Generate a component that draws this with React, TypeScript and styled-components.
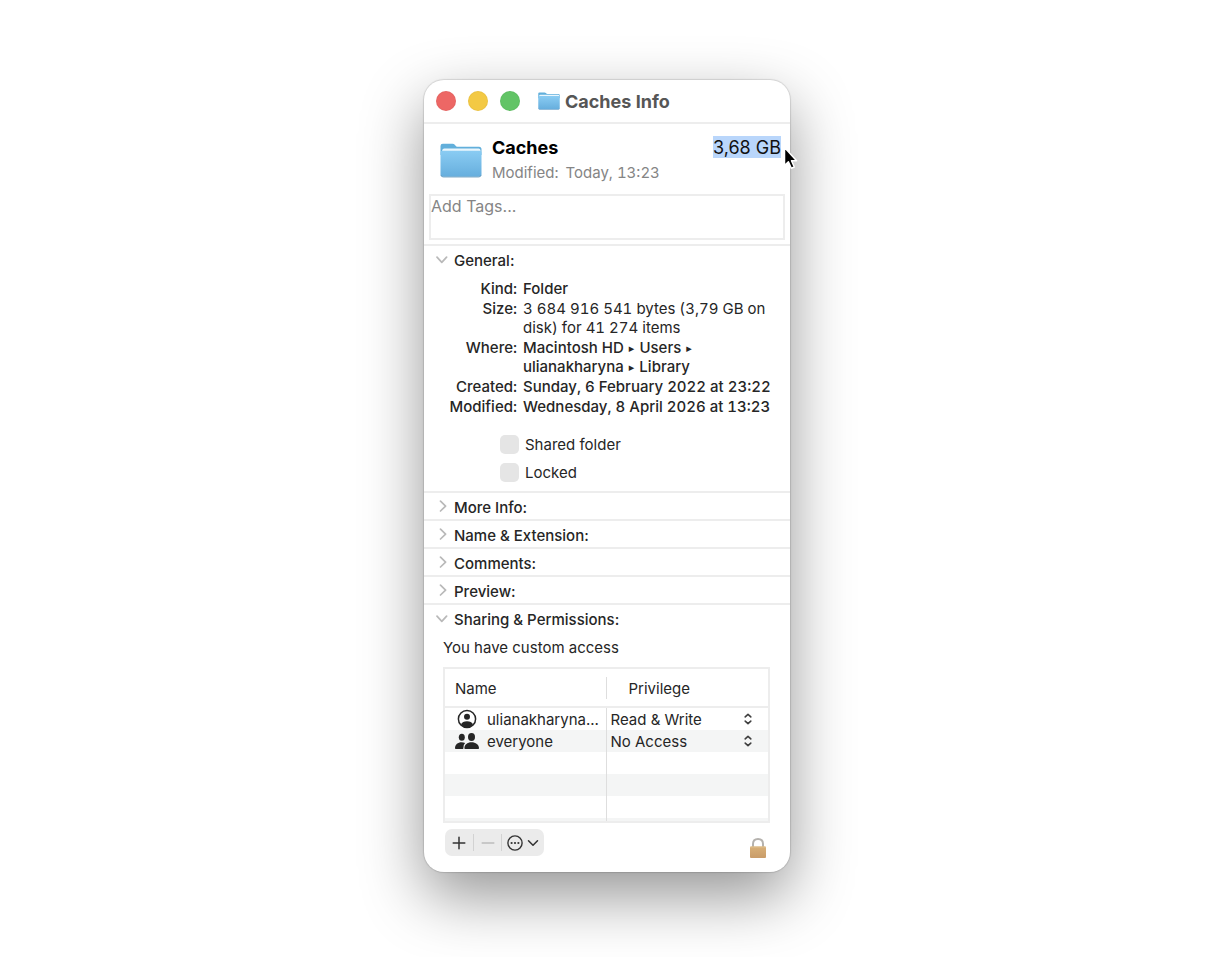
import React, { useState } from "react";
import styled, { createGlobalStyle, css } from "styled-components";

const GlobalStyle = createGlobalStyle`
  *, *::before, *::after { box-sizing: border-box; }
  body {
    margin: 0;
    background: #fff;
    color: #262626;
    font-family: Inter, "Liberation Sans", sans-serif;
    font-size: 15px;
    line-height: 19px;
  }
  button, input, select, textarea { font: inherit; color: inherit; }
`;

const line = "#ededed";

const Page = styled.main`
  display: flex;
  justify-content: center;
  align-items: flex-start;
  min-height: 100vh;
  padding: 80px 26px 84px 24px;
`;

const Window = styled.section`
  width: 100%;
  max-width: 366px;
  background: #fff;
  border-radius: 20px;
  box-shadow: 0 0 1px 1px rgba(0, 0, 0, 0.12), 0 24px 62px rgba(0, 0, 0, 0.42);
`;

const TitleBar = styled.header`
  display: flex;
  align-items: center;
  height: 44px;
  padding: 0 12px;
  border-bottom: 2px solid ${line};
`;

const Lights = styled.div`
  display: flex;
  gap: 12px;
  margin-right: 18px;
`;

const Light = styled.button<{ $color: string }>`
  width: 20px;
  height: 20px;
  padding: 0;
  border: 1px solid rgba(0, 0, 0, 0.03);
  border-radius: 50%;
  background: ${(p) => p.$color};
`;

const Title = styled.h1`
  margin: 0 0 0 5px;
  padding-top: 2px;
  color: #565656;
  font-size: 18px;
  line-height: 22px;
  font-weight: 700;
`;

const Summary = styled.div`
  display: flex;
  align-items: flex-start;
  padding: 12px 9px 0 16px;
`;

const SummaryText = styled.div`
  flex: 1;
  margin-left: 10px;
`;

const ItemName = styled.h2`
  margin: 0;
  color: #000;
  font-size: 18px;
  line-height: 24px;
  font-weight: 700;
`;

const Modified = styled.p`
  display: flex;
  gap: 7px;
  margin: 0;
  color: #858585;
  line-height: 25px;
  font-variant-numeric: tabular-nums;
`;

const FolderSlot = styled.div`
  display: flex;
  padding-top: 7px;
`;

const TotalSize = styled.div`
  position: relative;
  padding-top: 2px;
  background: #b9d6fb;
  color: #111;
  font-size: 18px;
  line-height: 20px;
`;

const Cursor = styled.svg`
  position: absolute;
  left: 100%;
  top: 8px;
`;

const Tags = styled.textarea`
  display: block;
  width: calc(100% - 10px);
  height: 46px;
  margin: 9px 5px 4px;
  padding: 0;
  border: 2px solid ${line};
  background: #fff;
  font-size: 16px;
  line-height: 20px;
  resize: none;
  outline: none;
  &::placeholder { color: #858585; opacity: 1; }
`;

const Section = styled.section`
  border-top: 2px solid ${line};
`;

const SectionToggle = styled.button`
  display: flex;
  align-items: center;
  gap: 6px;
  width: 100%;
  height: 26px;
  padding: 2px 12px 0;
  border: 0;
  background: none;
  font-weight: 500;
  text-align: left;
`;

const GeneralBody = styled.div`
  padding: 7px 12px 9px;
`;

const Facts = styled.dl`
  display: grid;
  grid-template-columns: 81px 1fr;
  gap: 1px 6px;
  margin: 0;
  white-space: nowrap;
  font-weight: 500;
  font-variant-numeric: tabular-nums;
`;

const FactLabel = styled.dt`
  justify-self: end;
`;

const FactValue = styled.dd<{ $light?: boolean }>`
  margin: 0;
  font-weight: ${(p) => (p.$light ? 400 : 500)};
`;

const Arrow = styled.span`
  margin: 0 1px;
  font-family: "DejaVu Sans", sans-serif;
  font-size: 11px;
  line-height: 1;
  vertical-align: 1px;
`;

const Checks = styled.div`
  display: grid;
  gap: 9px;
  padding: 19px 0 0 64px;
`;

const CheckLabel = styled.label`
  display: flex;
  align-items: center;
  gap: 6px;
`;

const Checkbox = styled.input`
  appearance: none;
  width: 19px;
  height: 19px;
  margin: 0;
  border-radius: 5px;
  background: #e5e5e5;
`;

const SharingBody = styled.div`
  padding: 7px 20px 13px 19px;
`;

const Access = styled.p`
  margin: 0 0 10px;
`;

const TableFrame = styled.div`
  height: 156px;
  border: 2px solid ${line};
  overflow: hidden;
`;

const Table = styled.table`
  width: 100%;
  table-layout: fixed;
  border-collapse: separate;
  border-spacing: 0;
`;

const HeadCell = styled.th<{ $second?: boolean }>`
  width: 50%;
  height: 39px;
  padding: 2px 0 0 ${(p) => (p.$second ? 22 : 10)}px;
  border-bottom: 2px solid ${line};
  font-weight: 400;
  text-align: left;
  ${(p) =>
    !p.$second &&
    css`
      background: linear-gradient(#dedede, #dedede) right 8px / 1px 22px no-repeat;
    `}
`;

const Row = styled.tr`
  &:nth-child(even) { background: #f4f5f5; }
`;

const Cell = styled.td`
  height: 22px;
  padding: 0;
  &:first-child { border-right: 1px solid #dedede; }
`;

const Person = styled.div`
  display: flex;
  align-items: center;
  padding-left: 10px;
  white-space: nowrap;
`;

const PersonIcon = styled.span`
  display: flex;
  justify-content: center;
  width: 24px;
  margin-right: 8px;
`;

const Picker = styled.div`
  display: grid;
  grid-template-columns: 1fr 32px;
  align-items: center;
  height: 22px;
`;

const PickerSelect = styled.select`
  grid-area: 1 / 1 / 2 / 3;
  appearance: none;
  width: 100%;
  height: 22px;
  padding: 0 4px;
  border: 0;
  background: none;
`;

const PickerArrows = styled.svg`
  grid-area: 1 / 2 / 2 / 3;
  justify-self: center;
  margin-right: 8px;
  pointer-events: none;
`;

const Footer = styled.footer`
  display: flex;
  justify-content: space-between;
  align-items: flex-start;
  padding: 6px 3px 0 2px;
`;

const ButtonGroup = styled.div`
  display: flex;
  align-items: center;
  height: 27px;
  border-radius: 7px;
  background: #ebebeb;
`;

const GroupButton = styled.button<{ $wide?: boolean }>`
  display: flex;
  align-items: center;
  justify-content: center;
  gap: 4px;
  width: ${(p) => (p.$wide ? 43 : 28)}px;
  height: 17px;
  padding: 0;
  border: 0;
  background: none;
  & + & { border-left: 1px solid #d2d2d2; }
`;

const LockButton = styled.button`
  display: flex;
  margin-top: 8px;
  padding: 0;
  border: 0;
  background: none;
`;

function FolderIcon({ width, height, id }: { width: number; height: number; id: string }) {
  return (
    <svg width={width} height={height} viewBox="0 0 42 35" preserveAspectRatio="none" aria-hidden="true">
      <defs>
        <linearGradient id={id} x1="0" y1="0" x2="0" y2="1">
          <stop offset="0" stopColor="#8accf3" />
          <stop offset="1" stopColor="#66aedd" />
        </linearGradient>
      </defs>
      <path d="M.5 12V3Q.5.800 2.800.800H12.500q1.500 0 2.500 1.200l.8.900q.9.900 2.200.9H39Q41.500 3.800 41.500 6.300V12z" fill="#62afdb" />
      <path d="M2.300 9V7.200Q2.300 5.400 4.300 5.400H38.700q1.700 0 1.700 1.800V9z" fill="#e9f6fd" />
      <path d="M.5 9.700Q.5 7.700 2.500 7.700H39.500q2 0 2 2V31.300q0 2.500-2.500 2.500h-36Q.5 33.800.5 31.300z" fill={`url(#${id})`} />
      <path d="M.9 32Q1.400 34 3.300 34h35.400q1.900 0 2.400-2" fill="none" stroke="#6397ba" strokeWidth=".8" />
    </svg>
  );
}

function Disclosure({ open }: { open: boolean }) {
  return (
    <svg width="12" height="14" viewBox="0 0 12 14" fill="none" stroke="#b9b9b9" strokeWidth="1.700" strokeLinecap="round" strokeLinejoin="round" aria-hidden="true">
      <path d={open ? "M1 4.200 5.800 9.400 10.600 4.200" : "M4.500 1.200 9.600 6.100 4.500 11"} />
    </svg>
  );
}

function SectionHeading({ label, open = false }: { label: string; open?: boolean }) {
  return (
    <SectionToggle type="button" aria-expanded={open}>
      <Disclosure open={open} />
      {label}
    </SectionToggle>
  );
}

function UserIcon() {
  return (
    <svg width="20" height="20" viewBox="0 0 20 20" aria-hidden="true">
      <circle cx="10" cy="10" r="8.600" fill="none" stroke="#262626" strokeWidth="1.500" />
      <circle cx="10" cy="7.700" r="3" fill="#262626" />
      <path d="M4 15.200Q5.500 12.300 10 12.300t6 2.900Q14 18.400 10 18.400T4 15.200z" fill="#262626" />
    </svg>
  );
}

function GroupIcon() {
  return (
    <svg width="24" height="18" viewBox="0 0 24 18" fill="#262626" aria-hidden="true">
      <ellipse cx="6.800" cy="5.200" rx="3" ry="3.500" />
      <path d="M0 16.300C0 12.600 3 10.300 6.500 10.300q2 0 3.600.7Q8 12.800 8.200 17H.8Q0 17 0 16.300z" />
      <ellipse cx="16.500" cy="4.900" rx="3.500" ry="4" />
      <path d="M9.400 16.200C9.400 12.700 12.300 10.200 16.500 10.200S24 12.700 24 16.200q0 .8-.8.8H10.200q-.8 0-.8-.8z" />
    </svg>
  );
}

function PrivilegePicker({ name, initial }: { name: string; initial: string }) {
  const [value, setValue] = useState(initial);
  return (
    <Picker>
      <PickerSelect aria-label={`Privilege for ${name}`} value={value} onChange={(e) => setValue(e.target.value)}>
        <option>Read &amp; Write</option>
        <option>Read only</option>
        <option>No Access</option>
      </PickerSelect>
      <PickerArrows width="8" height="12" viewBox="0 0 8 12" fill="none" stroke="#404040" strokeWidth="1.600" strokeLinecap="round" strokeLinejoin="round" aria-hidden="true">
        <path d="M1.200 3.900 4 1.300 6.800 3.900M1.200 8.100 4 10.700 6.800 8.100" />
      </PickerArrows>
    </Picker>
  );
}

const people = [
  { name: "ulianakharyna...", privilege: "Read & Write", icon: <UserIcon /> },
  { name: "everyone", privilege: "No Access", icon: <GroupIcon /> },
];

export default function App() {
  return (
    <>
      <GlobalStyle />
      <Page>
        <Window aria-label="Caches Info">
          <TitleBar>
            <Lights>
              <Light type="button" aria-label="Close" $color="#ed6765" />
              <Light type="button" aria-label="Minimize" $color="#f3c944" />
              <Light type="button" aria-label="Zoom" $color="#62c466" />
            </Lights>
            <FolderIcon width={22} height={18} id="folder-small" />
            <Title>Caches Info</Title>
          </TitleBar>

          <Summary>
            <FolderSlot>
              <FolderIcon width={42} height={35} id="folder-large" />
            </FolderSlot>
            <SummaryText>
              <ItemName>Caches</ItemName>
              <Modified>
                <span>Modified:</span>
                <span>Today, 13:23</span>
              </Modified>
            </SummaryText>
            <TotalSize>
              3,68 GB
              <Cursor width="20" height="28" viewBox="0 0 20 28" aria-hidden="true">
                <path d="M3.500 3.500V21.500L7.400 17.800 10.300 24.300 13.300 23 10.500 16.700H15.600z" fill="#000" stroke="#fff" strokeWidth="1.500" strokeLinejoin="round" />
              </Cursor>
            </TotalSize>
          </Summary>
          <Tags aria-label="Tags" placeholder="Add Tags..." />

          <Section>
            <SectionHeading label="General:" open />
            <GeneralBody>
              <Facts>
                <FactLabel>Kind:</FactLabel>
                <FactValue>Folder</FactValue>
                <FactLabel>Size:</FactLabel>
                <FactValue $light>
                  3 684 916 541 bytes (3,79 GB on
                  <br />
                  disk) for 41 274 items
                </FactValue>
                <FactLabel>Where:</FactLabel>
                <FactValue>
                  Macintosh HD <Arrow>▸</Arrow> Users <Arrow>▸</Arrow>
                  <br />
                  ulianakharyna <Arrow>▸</Arrow> Library
                </FactValue>
                <FactLabel>Created:</FactLabel>
                <FactValue>Sunday, 6 February 2022 at 23:22</FactValue>
                <FactLabel>Modified:</FactLabel>
                <FactValue>Wednesday, 8 April 2026 at 13:23</FactValue>
              </Facts>
              <Checks>
                <CheckLabel>
                  <Checkbox type="checkbox" />
                  Shared folder
                </CheckLabel>
                <CheckLabel>
                  <Checkbox type="checkbox" />
                  Locked
                </CheckLabel>
              </Checks>
            </GeneralBody>
          </Section>

          {["More Info:", "Name & Extension:", "Comments:", "Preview:"].map((label) => (
            <Section key={label}>
              <SectionHeading label={label} />
            </Section>
          ))}

          <Section>
            <SectionHeading label="Sharing & Permissions:" open />
            <SharingBody>
              <Access>You have custom access</Access>
              <TableFrame>
                <Table>
                  <thead>
                    <tr>
                      <HeadCell>Name</HeadCell>
                      <HeadCell $second>Privilege</HeadCell>
                    </tr>
                  </thead>
                  <tbody>
                    {people.map((p) => (
                      <Row key={p.name}>
                        <Cell>
                          <Person>
                            <PersonIcon>{p.icon}</PersonIcon>
                            {p.name}
                          </Person>
                        </Cell>
                        <Cell>
                          <PrivilegePicker name={p.name} initial={p.privilege} />
                        </Cell>
                      </Row>
                    ))}
                    {[0, 1, 2, 3].map((i) => (
                      <Row key={i} aria-hidden="true">
                        <Cell />
                        <Cell />
                      </Row>
                    ))}
                  </tbody>
                </Table>
              </TableFrame>
              <Footer>
                <ButtonGroup>
                  <GroupButton type="button" aria-label="Add">
                    <svg width="14" height="14" viewBox="0 0 14 14" stroke="#333" strokeWidth="1.500" strokeLinecap="round" aria-hidden="true">
                      <path d="M7 1.200V12.800M1.200 7H12.800" />
                    </svg>
                  </GroupButton>
                  <GroupButton type="button" aria-label="Remove" disabled>
                    <svg width="14" height="14" viewBox="0 0 14 14" stroke="#bdbdbd" strokeWidth="1.500" strokeLinecap="round" aria-hidden="true">
                      <path d="M1.200 7H12.800" />
                    </svg>
                  </GroupButton>
                  <GroupButton type="button" aria-label="Actions" $wide>
                    <svg width="16" height="16" viewBox="0 0 16 16" fill="none" stroke="#333" strokeWidth="1.400" aria-hidden="true">
                      <circle cx="8" cy="8" r="7.100" />
                      <g fill="#333" stroke="none">
                        <circle cx="4.600" cy="8" r="1.100" />
                        <circle cx="8" cy="8" r="1.100" />
                        <circle cx="11.400" cy="8" r="1.100" />
                      </g>
                    </svg>
                    <svg width="12" height="8" viewBox="0 0 12 8" fill="none" stroke="#333" strokeWidth="1.500" strokeLinecap="round" strokeLinejoin="round" aria-hidden="true">
                      <path d="M1.500 1.700 6 6.300 10.500 1.700" />
                    </svg>
                  </GroupButton>
                </ButtonGroup>
                <LockButton type="button" aria-label="Lock">
                  <svg width="18" height="22" viewBox="0 0 18 22" aria-hidden="true">
                    <defs>
                      <linearGradient id="lock-body" x1="0" y1="0" x2="0" y2="1">
                        <stop offset="0" stopColor="#d8b078" />
                        <stop offset="1" stopColor="#c99c69" />
                      </linearGradient>
                    </defs>
                    <path d="M4 11V7C4 3.700 6 1.900 9 1.900S14 3.700 14 7V11" fill="none" stroke="#b5b2ae" strokeWidth="2" />
                    <rect x="1" y="9.500" width="16" height="11.500" rx="1" fill="url(#lock-body)" />
                    <path d="M1.500 10H16.500" stroke="#e0c08e" strokeWidth="1" />
                  </svg>
                </LockButton>
              </Footer>
            </SharingBody>
          </Section>
        </Window>
      </Page>
    </>
  );
}
